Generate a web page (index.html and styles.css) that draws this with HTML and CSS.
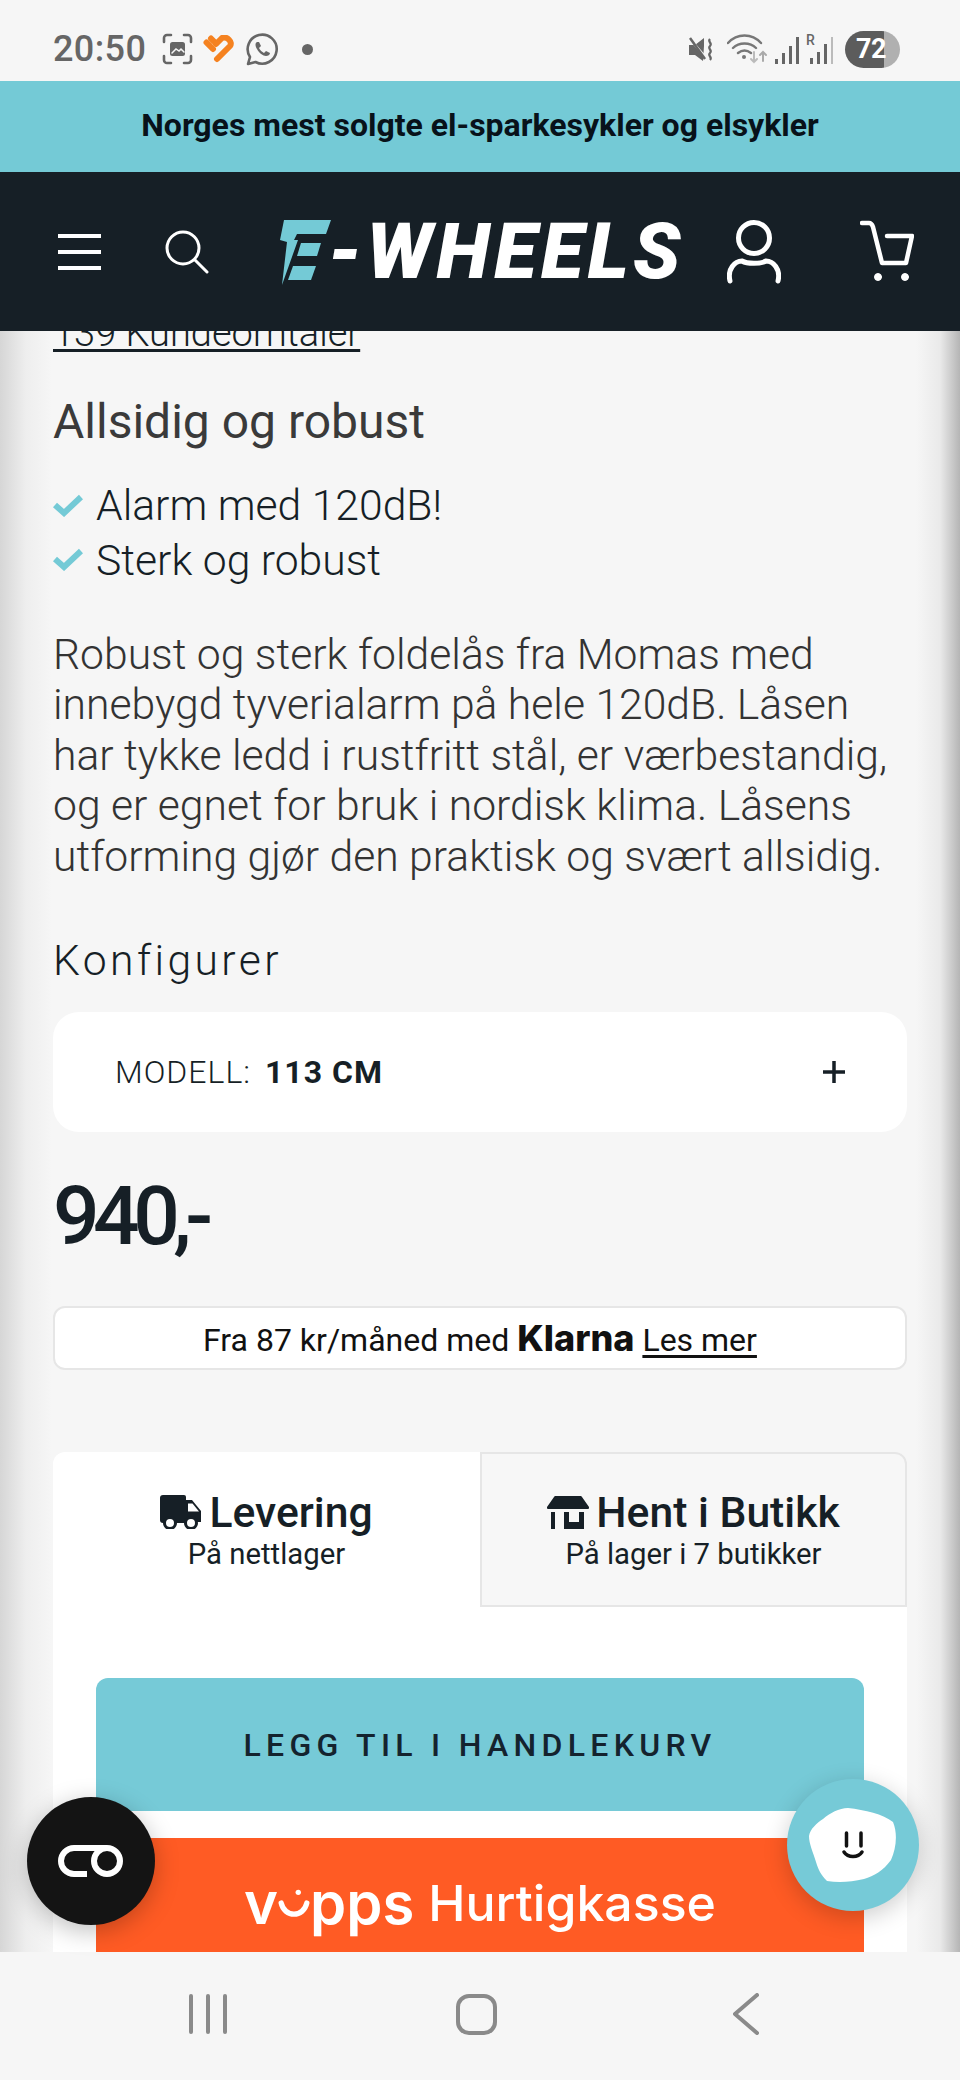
FILE: index.html
```html
<!DOCTYPE html>
<html lang="en">
<head>
    <meta charset="UTF-8">
    <meta name="viewport" content="width=device-width, initial-scale=1.0">
    <title>E-Wheels</title>
    <link rel="stylesheet" href="styles.css">
</head>
<body>
<div class="phone">

    <div class="status-bar">
        <span class="time">20:50</span>
        <svg class="st-shot" width="31" height="32" viewBox="0 0 31 32" fill="none" stroke="#666" stroke-width="2.6" stroke-linecap="round">
            <path d="M2 9V5a3 3 0 0 1 3-3h4M22 2h4a3 3 0 0 1 3 3v4M29 23v4a3 3 0 0 1-3 3h-4M9 30H5a3 3 0 0 1-3-3v-4"/>
            <rect x="8" y="9" width="15" height="14" rx="2.5" fill="#666" stroke="none"/>
            <path d="M10 20l4-4 3 2 2-2 3 3" stroke="#f6f6f6" stroke-width="1.5"/>
        </svg>
        <svg class="st-heart" width="33" height="28" viewBox="0 0 33 28" fill="none" stroke="#f58220" stroke-width="6" stroke-linecap="round" stroke-linejoin="round">
            <path d="M3.500 7.500L10 14M8 3.500l3 3"/>
            <path d="M14 24L27 11c3-4-3-10-8-8l-6 6"/>
        </svg>
        <svg class="st-wa" width="33" height="33" viewBox="0 0 33 33" fill="none" stroke="#666" stroke-width="2.6">
            <path d="M2 31l2-7A14.5 14.5 0 1 1 9.500 29z" stroke-linejoin="round"/>
            <path d="M11 9c-2 1-2 4 0 7 2 4 6 7 9 7 2 0 4-1 4-3l-4-2-2 2c-2-1-4-3-5-5l2-2-2-4z" fill="#666" stroke="none"/>
        </svg>
        <span class="st-dot"></span>
        <span class="st-fill"></span>
        <svg width="27" height="27" viewBox="0 0 27 27" fill="none">
            <path d="M1 9h6l9-7v8l-1 15-8-6H1z" fill="#666"/>
            <path d="M2 3l17 20" stroke="#f6f6f6" stroke-width="2.500"/>
            <path d="M2 2l15 21" stroke="#666" stroke-width="2.500"/>
            <path d="M22 3c-3 3 3 4 0 7s3 4 0 7 3 4 0 7" stroke="#666" stroke-width="2.200"/>
        </svg>
        <svg class="st-wifi" width="40" height="30" viewBox="0 0 40 30" fill="none" stroke="#777" stroke-width="2.400" stroke-linecap="round">
            <path d="M1 9c9-10 24-10 33 0M6 14c6-6 17-6 23 0M11 19c4-3 9-3 13 0"/>
            <circle cx="17" cy="23" r="2" fill="#777" stroke="none"/>
            <path d="M27 18v10M24 25l3 3 3-3" stroke="#bbb" stroke-width="2"/>
            <path d="M36 27V18M33 21l3-3 3 3" stroke="#aaa" stroke-width="2"/>
        </svg>
        <svg class="st-sig" width="24" height="29" viewBox="0 0 24 29">
            <rect x="0" y="24" width="3" height="5" fill="#666"/>
            <rect x="7" y="18" width="3" height="11" fill="#666"/>
            <rect x="14" y="11" width="3" height="18" fill="#666"/>
            <rect x="21" y="2" width="3" height="27" fill="#666"/>
        </svg>
        <span class="st-roam">
            <span class="st-r">R</span>
            <svg width="27" height="29" viewBox="0 0 27 29">
                <rect x="4" y="23" width="3" height="6" fill="#666"/>
                <rect x="11" y="17" width="3" height="12" fill="#666"/>
                <rect x="18" y="9" width="3" height="20" fill="#666"/>
                <rect x="25" y="2" width="2" height="27" fill="#bbb"/>
            </svg>
        </span>
        <span class="battery"><span class="battery-num">72</span></span>
    </div>

    <div class="banner">Norges mest solgte el-sparkesykler og elsykler</div>

    <header class="top-nav">
        <div class="burger"><span></span><span></span><span></span></div>
        <svg class="search-icon" width="44" height="44" viewBox="0 0 44 44" fill="none" stroke="#fff" stroke-width="3" stroke-linecap="round">
            <circle cx="18" cy="18" r="16"/>
            <path d="M30 30l12 12"/>
        </svg>
        <div class="logo">
            <svg width="52" height="66" viewBox="0 0 52 66" fill="#74cad6">
                <path d="M4 1H51L46 15H17L14 21H18L2 66 7 23 0 21z"/>
                <path d="M21 24H41L37 37H17z"/>
                <path d="M13 47H36L31 61H8z"/>
            </svg>
            <span class="logo-text">-WHEELS</span>
        </div>
        <svg class="user-icon" width="54" height="64" viewBox="0 0 54 64" fill="none" stroke="#fff" stroke-width="5" stroke-linecap="round">
            <circle cx="27" cy="18" r="15.500"/>
            <path d="M3 61c-3-12 5-20 12-20 5 3 19 3 24 0 7 0 15 8 12 20"/>
        </svg>
        <svg class="cart-icon" width="54" height="64" viewBox="0 0 54 64" fill="none" stroke="#fff" stroke-width="4.500" stroke-linecap="round" stroke-linejoin="round">
            <path d="M2 3h7c2 0 3 1 4 4l9 36h24l6-27H27"/>
            <circle cx="18" cy="57" r="3.500" fill="#fff" stroke-width="1"/>
            <circle cx="45" cy="57" r="3.500" fill="#fff" stroke-width="1"/>
        </svg>
    </header>

    <main class="content">
        <a class="reviews" href="#">139 Kundeomtaler</a>
        <h2 class="product-sub">Allsidig og robust</h2>
        <ul class="checks">
            <li>
                <svg width="30" height="23" viewBox="0 0 30 23" fill="none" stroke="#74cad6" stroke-width="6"><path d="M2 11l9 8L28 3"/></svg>
                Alarm med 120dB!
            </li>
            <li>
                <svg width="30" height="23" viewBox="0 0 30 23" fill="none" stroke="#74cad6" stroke-width="6"><path d="M2 11l9 8L28 3"/></svg>
                Sterk og robust
            </li>
        </ul>
        <p class="desc">Robust og sterk foldelås fra Momas med innebygd tyverialarm på hele 120dB. Låsen har tykke ledd i rustfritt stål, er værbestandig, og er egnet for bruk i nordisk klima. Låsens utforming gjør den praktisk og svært allsidig.</p>
        <h3 class="config-title">Konfigurer</h3>
        <div class="option">
            <span class="option-label">MODELL:</span>
            <b class="option-value">113 CM</b>
            <svg class="option-plus" width="22" height="22" viewBox="0 0 22 22" stroke="#161f26" stroke-width="3.500"><path d="M11 0v22M0 11h22"/></svg>
        </div>
        <div class="price">940,-</div>
        <div class="klarna-box">
            Fra 87 kr/måned med <b class="klarna">Klarna</b> <a href="#">Les mer</a>
        </div>
        <section class="buy-panel">
            <div class="tabs">
                <div class="tab active">
                    <div class="tab-title">
                        <svg width="42" height="34" viewBox="0 0 42 34" fill="#161f26">
                            <path d="M3 0h21a2 2 0 0 1 2 2v26H3a3 3 0 0 1-3-3V3a3 3 0 0 1 3-3z"/>
                            <path d="M26 5h6l9 11v11H26zM28 8.500v8h11l-6.500-8z" fill-rule="evenodd"/>
                            <circle cx="10" cy="28" r="5.500" fill="#fff" stroke="#161f26" stroke-width="3"/>
                            <circle cx="31" cy="28" r="5.500" fill="#fff" stroke="#161f26" stroke-width="3"/>
                        </svg>
                        Levering
                    </div>
                    <div class="tab-sub">På nettlager</div>
                </div>
                <div class="tab">
                    <div class="tab-title">
                        <svg width="42" height="33" viewBox="0 0 42 33" fill="#161f26">
                            <path d="M9 0h24a2 2 0 0 1 2 1l7 10v1a1 1 0 0 1-1 1H1a1 1 0 0 1-1-1v-1L7 1a2 2 0 0 1 2-1z"/>
                            <path d="M4 16h4v17H4z"/>
                            <path d="M17 16h5v10h10V16h5v17H17z"/>
                        </svg>
                        Hent i Butikk
                    </div>
                    <div class="tab-sub">På lager i 7 butikker</div>
                </div>
            </div>
            <button class="add-btn" type="button">LEGG TIL I HANDLEKURV</button>
            <button class="vipps-btn" type="button">
                <span class="vipps-logo">v<svg width="32" height="32" viewBox="0 0 30 30" fill="none" stroke="#fff" stroke-width="5" stroke-linecap="round"><path d="M3 15c3 14 21 14 24 0"/><circle cx="19" cy="5" r="2.500" fill="#fff" stroke="none"/></svg>pps</span>
                Hurtigkasse
            </button>
        </section>
        <div class="edge edge-left"></div>
        <div class="edge edge-right"></div>
    </main>

    <nav class="soft-keys">
        <div class="key-recent"><span></span><span></span><span></span></div>
        <div class="key-home"></div>
        <svg class="key-back" width="26" height="42" viewBox="0 0 26 42" fill="none" stroke="#8a8a8a" stroke-width="4" stroke-linecap="round" stroke-linejoin="round"><path d="M24 2L2 21l22 19"/></svg>
    </nav>

    <div class="fab-left">
        <svg width="66" height="32" viewBox="0 0 66 32" fill="none" stroke="#fff" stroke-width="6">
            <circle cx="49" cy="16" r="13"/>
            <path d="M49 3H16a13 13 0 0 0 0 26h13"/>
        </svg>
    </div>
    <div class="fab-right">
        <svg width="88" height="75" viewBox="0 0 88 75">
            <path d="M39 0C56 2 74 6 84 14c5 12 3 27-2 38-8 11-17 16-27 19-13 3-25 4-37 2-6-6-9-12-11-19C4 44 0 36 0 28 1 21 8 15 14 11 21 5 30 0 39 0z" fill="#fff"/>
            <path d="M37.500 25v13M52 25v13M35 44c4 6 14 6 18 0" fill="none" stroke="#111" stroke-width="3.500" stroke-linecap="round"/>
        </svg>
    </div>

</div>
</body>
</html>
```

FILE: styles.css
```css
* {
    box-sizing: border-box;
}
body {
    margin: 0;
    font-family: Roboto, Arial, sans-serif;
    color: #161f26;
}
.phone {
    position: relative;
    display: flex;
    flex-direction: column;
    width: 960px;
    height: 2080px;
    overflow: hidden;
    background-color: #f6f6f6;
}

/* status bar */
.status-bar {
    display: flex;
    align-items: center;
    height: 81px;
    padding: 17px 60px 0 53px;
    background-color: #f6f6f6;
    flex: none;
}
.time {
    font-size: 36px;
    font-weight: 500;
    letter-spacing: 0.4px;
    color: #666;
    margin-right: 16px;
}
.st-heart {
    margin-left: 10px;
}
.st-wa {
    margin-left: 10px;
}
.st-dot {
    width: 11px;
    height: 11px;
    margin-left: 23px;
    border-radius: 50%;
    background-color: #666;
}
.st-fill {
    flex: 1;
}
.st-wifi {
    margin-left: 12px;
}
.st-sig {
    margin-left: 8px;
}
.st-roam {
    position: relative;
    margin-left: 7px;
    display: flex;
}
.st-r {
    position: absolute;
    top: -3px;
    left: 0;
    font-size: 14px;
    font-weight: 500;
    color: #666;
}
.battery {
    display: flex;
    align-items: center;
    width: 55px;
    height: 37px;
    margin-left: 12px;
    padding-left: 11px;
    border-radius: 19px;
    background: linear-gradient(to right, #5c5c5c 0, #5c5c5c 70%, #b0b0b0 70%);
}
.battery-num {
    font-size: 27px;
    font-weight: 700;
    color: #fff;
    letter-spacing: -0.5px;
}

/* banner + header */
.banner {
    flex: none;
    height: 91px;
    line-height: 89px;
    text-align: center;
    font-size: 32px;
    font-weight: 700;
    color: #08121a;
    background-color: #74cad6;
}
.top-nav {
    flex: none;
    display: flex;
    align-items: center;
    height: 159px;
    padding-left: 58px;
    background-color: #161f26;
}
.burger {
    display: flex;
    flex-direction: column;
    gap: 12px;
    width: 43px;
}
.burger span {
    height: 4px;
    background-color: #fff;
}
.search-icon {
    margin-left: 64px;
}
.logo {
    display: flex;
    align-items: center;
    margin-left: 71px;
}
.logo-text {
    margin-left: -4px;
    font-size: 78px;
    line-height: 66px;
    font-weight: 900;
    font-style: italic;
    letter-spacing: 4.4px;
    color: #fff;
}
.user-icon {
    margin-left: 42px;
}
.cart-icon {
    margin-left: 79px;
}

/* product content */
.content {
    position: relative;
    flex: 1;
    min-height: 0;
    overflow: hidden;
    padding: 0 53px;
    background-color: #f6f6f6;
}
.reviews {
    display: block;
    width: fit-content;
    height: 40px;
    margin-top: -18px;
    font-size: 38px;
    line-height: 40px;
    font-weight: 300;
    color: #161f26;
    text-decoration: underline;
    text-decoration-thickness: 3px;
    text-underline-offset: 3px;
}
.product-sub {
    margin: 42px 0 0;
    font-size: 48px;
    line-height: 54px;
    font-weight: 400;
    color: #3a3a3a;
}
.checks {
    list-style: none;
    margin: 29px 0 0;
    padding: 0;
}
.checks li {
    display: flex;
    align-items: center;
    gap: 13px;
    height: 54.5px;
    font-size: 42.67px;
    font-weight: 300;
    color: #161f26;
}
.desc {
    margin: 41.5px 0 0;
    font-size: 42.67px;
    line-height: 50.6px;
    font-weight: 300;
    color: #333;
}
.config-title {
    margin: 55.5px 0 0;
    font-size: 42.67px;
    line-height: 46px;
    font-weight: 300;
    letter-spacing: 3.4px;
    color: #161f26;
}
.option {
    display: flex;
    align-items: center;
    height: 120px;
    margin-top: 29.5px;
    padding: 0 62px;
    border-radius: 26px;
    background-color: #fff;
}
.option-label {
    font-size: 32px;
    font-weight: 300;
    letter-spacing: 1px;
    margin-right: 14px;
}
.option-value {
    font-size: 32px;
    font-weight: 700;
    letter-spacing: 1px;
}
.option-plus {
    margin-left: auto;
}
.price {
    margin-top: 39px;
    font-size: 82px;
    line-height: 90px;
    font-weight: 500;
    letter-spacing: -6.5px;
}
.klarna-box {
    height: 64px;
    margin-top: 45px;
    line-height: 60px;
    text-align: center;
    font-size: 32px;
    font-weight: 400;
    color: #111;
    background-color: #fff;
    border: 2px solid #e6e6e6;
    border-radius: 12px;
}
.klarna-box a {
    color: #111;
    text-decoration: underline;
    text-decoration-thickness: 3px;
    text-underline-offset: 4px;
}
.klarna {
    font-family: Inter, Roboto, sans-serif;
    font-size: 36px;
    font-weight: 800;
    letter-spacing: 0;
}
.buy-panel {
    margin-top: 82px;
    height: 640px;
    padding-bottom: 20px;
    background-color: #fff;
    border-radius: 12px 12px 0 0;
}
.tabs {
    display: grid;
    grid-template-columns: 1fr 1fr;
    height: 155px;
}
.tab {
    padding-top: 35px;
    text-align: center;
}
.tab:last-child {
    padding-top: 33px;
    background-color: #f7f7f7;
    border: 2px solid #e6e6e6;
    border-radius: 0 12px 0 0;
}
.tab-title {
    display: flex;
    align-items: center;
    justify-content: center;
    gap: 7px;
    font-size: 42.67px;
    line-height: 50px;
    font-weight: 500;
}
.tab-sub {
    font-size: 29.3px;
    line-height: 34px;
    font-weight: 400;
    color: #161f26;
}
.add-btn {
    display: block;
    width: 768px;
    height: 133px;
    margin: 71px auto 0;
    border: none;
    border-radius: 12px 12px 0 0;
    background-color: #76cad7;
    font-family: Roboto, Arial, sans-serif;
    font-size: 32px;
    font-weight: 500;
    letter-spacing: 5.3px;
    color: #14232e;
}
.vipps-btn {
    display: flex;
    align-items: center;
    justify-content: center;
    gap: 14px;
    width: 768px;
    height: 130px;
    margin: 27px auto 0;
    padding: 0;
    border: none;
    background-color: #ff5b24;
    font-family: Inter, Roboto, sans-serif;
    font-size: 50px;
    font-weight: 500;
    color: #fff;
}
.vipps-logo {
    display: inline-flex;
    align-items: center;
    font-size: 58px;
    font-weight: 600;
}
.edge {
    position: absolute;
    top: 0;
    bottom: 0;
    width: 52px;
    pointer-events: none;
}
.edge-left {
    left: 0;
    background: linear-gradient(to right, #d6d6d6 0, rgba(230, 230, 230, 0.5) 50%, rgba(246, 246, 246, 0) 100%);
}
.edge-right {
    right: 0;
    width: 44px;
    background: linear-gradient(to left, #b5b5b5 0, rgba(225, 225, 225, 0.6) 45%, rgba(246, 246, 246, 0) 100%);
}

/* android keys */
.soft-keys {
    flex: none;
    display: flex;
    align-items: center;
    height: 128px;
    padding: 0 0 4px 189px;
    background-color: #f6f6f6;
}
.key-recent {
    display: flex;
    gap: 13px;
}
.key-recent span {
    width: 4px;
    height: 40px;
    border-radius: 2px;
    background-color: #8a8a8a;
}
.key-home {
    width: 41px;
    height: 41px;
    margin-left: 229px;
    border: 4px solid #8a8a8a;
    border-radius: 13px;
}
.key-back {
    margin-left: 236px;
}

/* floating buttons */
.fab-left, .fab-right {
    position: absolute;
    display: flex;
    align-items: center;
    justify-content: center;
    border-radius: 50%;
}
.fab-left {
    left: 27px;
    top: 1797px;
    width: 128px;
    height: 128px;
    background-color: #141414;
    box-shadow: 0 6px 24px rgba(0, 0, 0, 0.25);
}
.fab-right {
    left: 787px;
    top: 1779px;
    width: 132px;
    height: 132px;
    background-color: #76cad7;
    box-shadow: 0 6px 24px rgba(0, 0, 0, 0.2);
}
```
